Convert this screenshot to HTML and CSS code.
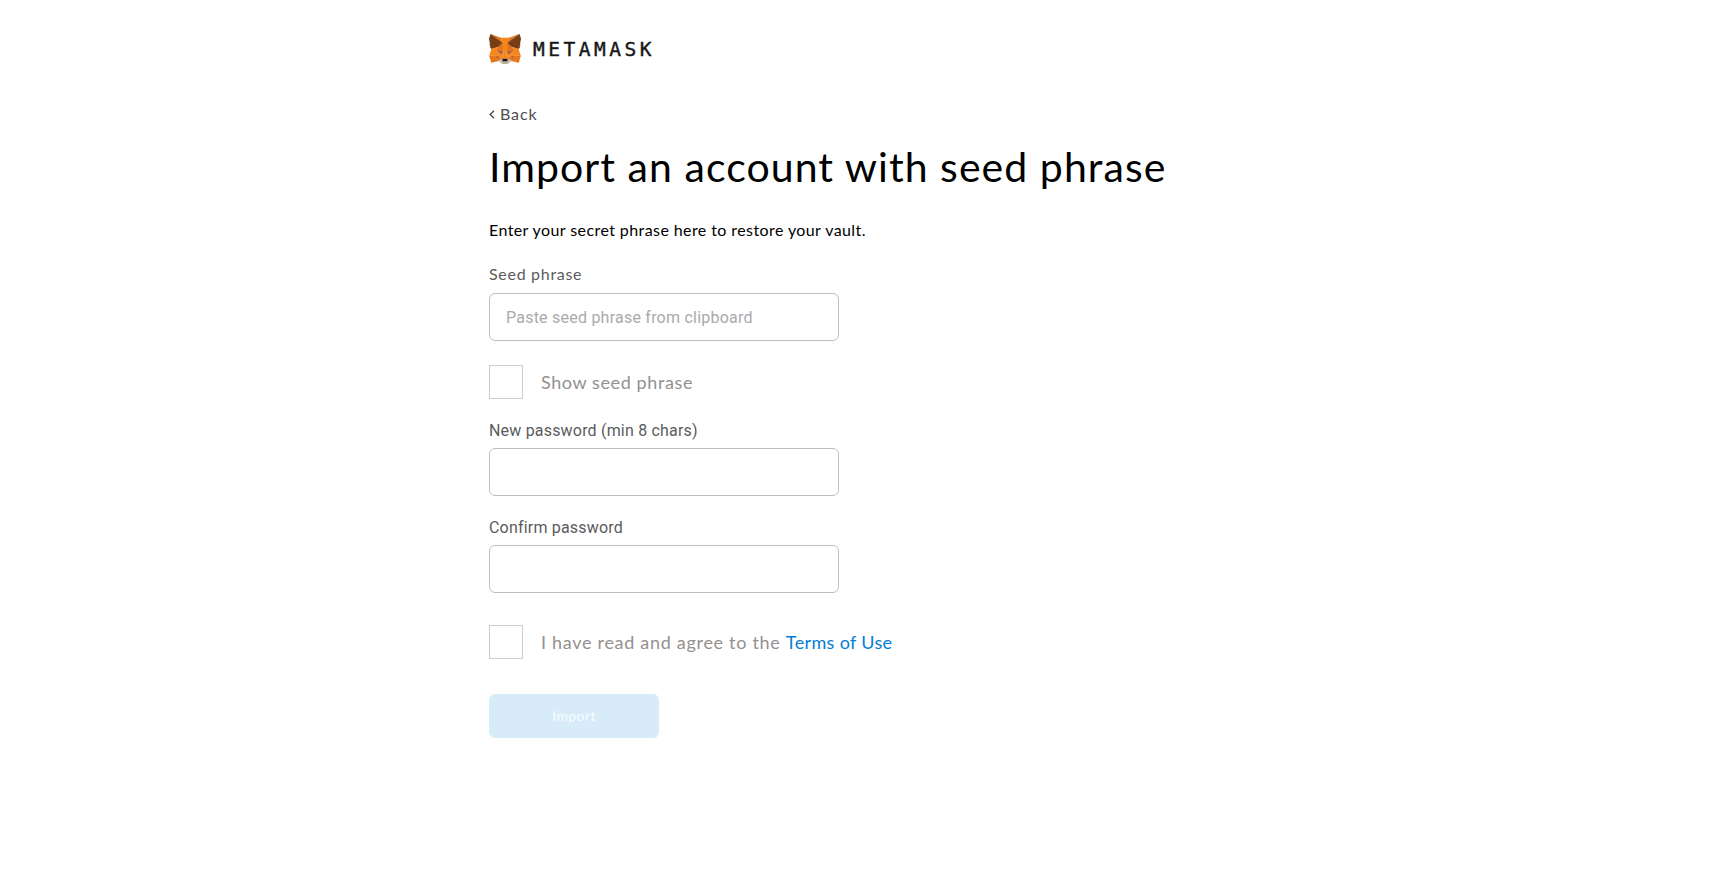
FILE: index.html
```
<!DOCTYPE html>
<html lang="en">
<head>
<meta charset="utf-8">
<title>MetaMask</title>
<link rel="stylesheet" href="styles.css">
</head>
<body>
<main class="page">
  <header class="brand">
    <svg class="fox" viewBox="31.8 35.5 255 236.4" preserveAspectRatio="none" aria-hidden="true">
      <g fill="#E2761B" stroke="#E2761B"><polygon points="274.1,35.5 174.6,109.4 193,65.8"/></g>
      <g fill="#E4761B" stroke="#E4761B">
        <polygon points="44.4,35.5 143.1,110.1 125.6,65.8"/>
        <polygon points="238.3,206.8 211.8,247.4 268.5,263 284.8,207.7"/>
        <polygon points="33.9,207.7 50.1,263 106.8,247.4 80.3,206.8"/>
        <polygon points="103.6,138.2 87.8,162.1 144.1,164.6 142.1,104.1"/>
        <polygon points="214.9,138.2 175.9,103.4 174.6,164.6 230.8,162.1"/>
        <polygon points="106.8,247.4 140.6,230.9 111.4,208.1"/>
        <polygon points="177.9,230.9 211.8,247.4 207.1,208.1"/>
      </g>
      <g fill="#D7C1B3" stroke="#D7C1B3">
        <polygon points="211.8,247.4 177.9,230.9 180.6,253 180.3,262.3"/>
        <polygon points="106.8,247.4 138.3,262.3 138.1,253 140.6,230.9"/>
      </g>
      <g fill="#233447" stroke="#233447">
        <polygon points="138.8,193.5 110.6,185.2 130.5,176.1"/>
        <polygon points="179.7,193.5 188,176.1 208,185.2"/>
      </g>
      <g fill="#CD6116" stroke="#CD6116">
        <polygon points="106.8,247.4 111.6,206.8 80.3,207.7"/>
        <polygon points="207,206.8 211.8,247.4 238.3,207.7"/>
        <polygon points="230.8,162.1 174.6,164.6 179.8,193.5 188.1,176.1 208.1,185.2"/>
        <polygon points="110.6,185.2 130.6,176.1 138.8,193.5 144.1,164.6 87.8,162.1"/>
      </g>
      <g fill="#E4751F" stroke="#E4751F">
        <polygon points="87.8,162.1 111.4,208.1 110.6,185.2"/>
        <polygon points="208.1,185.2 207.1,208.1 230.8,162.1"/>
        <polygon points="144.1,164.6 138.8,193.5 145.4,227.6 146.9,182.7"/>
        <polygon points="174.6,164.6 171.9,182.6 173.1,227.6 179.8,193.5"/>
      </g>
      <g fill="#F6851B" stroke="#F6851B">
        <polygon points="179.8,193.5 173.1,227.6 177.9,230.9 207.1,208.1 208.1,185.2"/>
        <polygon points="110.6,185.2 111.4,208.1 140.6,230.9 145.4,227.6 138.8,193.5"/>
      </g>
      <g fill="#C0AD9E" stroke="#C0AD9E"><polygon points="180.3,262.3 180.6,253 178.1,250.8 140.4,250.8 138.1,253 138.3,262.3 106.8,247.4 117.8,256.4 140.1,271.9 178.4,271.9 200.8,256.4 211.8,247.4"/></g>
      <g fill="#161616" stroke="#161616"><polygon points="177.9,230.9 173.1,227.6 145.4,227.6 140.6,230.9 138.1,253 140.4,250.8 178.1,250.8 180.6,253"/></g>
      <g fill="#763D16" stroke="#763D16">
        <polygon points="278.3,114.2 286.8,73.4 274.1,35.5 177.9,106.9 214.9,138.2 267.2,153.5 278.8,140 273.8,136.4 281.8,129.1 275.6,124.3 283.6,118.2"/>
        <polygon points="31.8,73.4 40.3,114.2 34.9,118.2 42.9,124.3 36.8,129.1 44.8,136.4 39.8,140 51.3,153.5 103.6,138.2 140.6,106.9 44.4,35.5"/>
      </g>
      <g fill="#F6851B" stroke="#F6851B">
        <polygon points="267.2,153.5 214.9,138.2 230.8,162.1 207.1,208.1 238.3,207.7 284.8,207.7"/>
        <polygon points="103.6,138.2 51.3,153.5 33.9,207.7 80.3,207.7 111.4,208.1 87.8,162.1"/>
        <polygon points="174.6,164.6 177.9,106.9 193.1,65.8 125.6,65.8 140.6,106.9 144.1,164.6 145.3,182.8 145.4,227.6 173.1,227.6 173.3,182.8"/>
      </g>
    </svg>
    <span class="wordmark">METAMASK</span>
  </header>

  <a class="back"><svg class="chevron" viewBox="0 0 6 9" aria-hidden="true"><path d="M5 .8 1.2 4.5 5 8.2"/></svg>Back</a>
  <h1 class="title">Import an account with seed phrase</h1>
  <p class="intro">Enter your secret phrase here to restore your vault.</p>

  <label class="label label-seed">Seed phrase</label>
  <div class="field placeholder">Paste seed phrase from clipboard</div>

  <div class="check-row show-row">
    <span class="box"></span>
    <span class="check-text show-text">Show seed phrase</span>
  </div>

  <label class="label">New password (min 8 chars)</label>
  <div class="field"></div>

  <label class="label label-confirm">Confirm password</label>
  <div class="field"></div>

  <div class="check-row terms-row">
    <span class="box"></span>
    <span class="check-text">I have read and agree to the <a class="link">Terms of Use</a></span>
  </div>

  <button class="submit" type="button" disabled>Import</button>
</main>
</body>
</html>
```
FILE: styles.css
```
* { box-sizing: border-box; }

body {
  margin: 0;
  background: #fff;
  color: #000;
  font-family: Lato, sans-serif;
  font-size: 16px;
}

.page {
  display: flex;
  flex-direction: column;
  align-items: flex-start;
  width: 742px;
  margin: 0 auto;
  padding-top: 33px;
}

.brand { display: flex; align-items: center; height: 32px; }
.fox { width: 32px; height: 30px; overflow: visible; }
.wordmark {
  margin-left: 12px;
  padding-top: 2px;
  color: #161616;
  font: 19.5px/30px "DejaVu Sans Mono", monospace;
  letter-spacing: 3.5px;
  -webkit-text-stroke: .4px #161616;
}

.back {
  display: flex;
  align-items: center;
  margin-top: 39px;
  color: #4d4d4d;
  line-height: 20px;
  letter-spacing: .9px;
}
.chevron {
  width: 6px;
  height: 9px;
  margin-right: 5px;
  fill: none;
  stroke: #4d4d4d;
  stroke-width: 1.4;
}

.title {
  margin: 17px 0 0;
  font-size: 41px;
  font-weight: 400;
  line-height: 52px;
  letter-spacing: 1.05px;
  white-space: nowrap;
}

.intro { margin: 27px 0 0; line-height: 20px; letter-spacing: .41px; }

.label {
  margin-bottom: 7px;
  color: #5b5b5b;
  font-family: Roboto, sans-serif;
  line-height: 20px;
  letter-spacing: .19px;
}
.label-seed {
  margin: 24px 0 9px;
  font-family: Lato, sans-serif;
  letter-spacing: .7px;
}
.label-confirm { margin-top: 22px; }

.field {
  width: 350px;
  height: 48px;
  padding: 0 16px;
  border: 1px solid #bbc0c5;
  border-radius: 6px;
  line-height: 48px;
}
.placeholder {
  color: #aaa;
  font-family: Roboto, sans-serif;
  letter-spacing: .23px;
}

.check-row { display: flex; align-items: center; gap: 18px; height: 34px; }
.show-row { margin: 24px 0 22px; }
.terms-row { margin: 32px 0 35px; }
.box { width: 34px; height: 34px; border: 1px solid #cdcdcd; }
.check-text {
  color: #939090;
  font-size: 18px;
  line-height: 24px;
  letter-spacing: .7px;
}
.show-text { letter-spacing: .6px; }
.link { color: #037dd6; letter-spacing: .35px; }

.submit {
  width: 170px;
  height: 44px;
  padding: 0 0 2px;
  border: 0;
  border-radius: 6px;
  background: #d7ebf9;
  color: #fafdff;
  font: 14px Lato, sans-serif;
  letter-spacing: .4px;
}
```
